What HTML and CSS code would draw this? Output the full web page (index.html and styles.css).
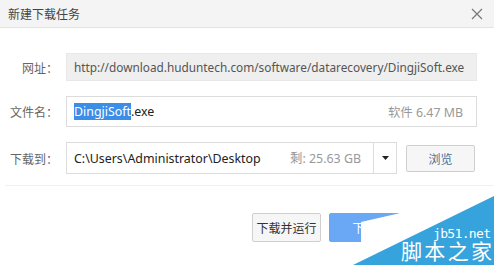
FILE: index.html
```html
<!DOCTYPE html>
<html lang="zh-CN">
<head>
    <meta charset="UTF-8">
    <title>新建下载任务</title>
    <link rel="stylesheet" href="styles.css">
</head>
<body>
    <div class="dialog">
        <div class="titlebar">
            <span class="title">新建下载任务</span>
            <svg class="close" width="12" height="12" viewBox="0 0 12 12">
                <path d="M1 1L11 11M11 1L1 11" stroke="#777" stroke-width="1.2" fill="none"/>
            </svg>
        </div>

        <div class="form">
            <div class="row row-url">
                <label>网址：</label>
                <div class="field url">http://download.huduntech.com/software/datarecovery/DingjiSoft.exe</div>
            </div>
            <div class="row row-name">
                <label>文件名：</label>
                <div class="field name">
                    <span><span class="sel">DingjiSoft</span>.exe</span>
                    <span class="meta">软件 6.47 MB</span>
                </div>
            </div>
            <div class="row row-path">
                <label>下载到：</label>
                <div class="path-group">
                    <div class="field path">
                        <span>C:\Users\Administrator\Desktop</span>
                        <span class="meta">剩: 25.63 GB</span>
                    </div>
                    <div class="drop">
                        <svg width="7" height="4" viewBox="0 0 7 4"><path d="M0 0H7L3.5 4Z" fill="#222"/></svg>
                    </div>
                </div>
                <button class="btn browse">浏览</button>
            </div>
        </div>

        <div class="footer">
            <button class="btn">下载并运行</button>
            <button class="btn primary">下载</button>
        </div>

        <!-- site watermark in the corner -->
        <svg class="watermark" width="154" height="85" viewBox="0 0 154 85">
            <polygon points="21,42 100,24 154,10 154,17 13,85 21,85" fill="#fff"/>
            <polygon points="13,85 154,16 154,85" fill="#36a3dd"/>
            <text x="93" y="58" class="wm-en" textLength="58">jb51.net</text>
            <text x="61" y="79" class="wm-cn" textLength="91">脚本之家</text>
        </svg>
    </div>
</body>
</html>
```

FILE: styles.css
```css
body {
    margin: 0;
    font-family: "Noto Sans", "Noto Sans CJK SC", sans-serif;
    font-size: 12px;
    color: #333;
    background: #fff;
}

.dialog {
    position: relative;
    width: 494px;
    height: 265px;
    overflow: hidden;
    background: #fff;
}

.titlebar {
    height: 28px;
    background: #f4f4f4;
    border-bottom: 1px solid #e2e2e2;
    box-sizing: border-box;
    display: flex;
    align-items: center;
    justify-content: space-between;
    padding: 0 11px 0 8px;
}

.title {
    font-family: "Noto Sans CJK SC", sans-serif;
    font-size: 12px;
    color: #444;
}

.form {
    padding: 25px 17px 0 0;
    display: flex;
    flex-direction: column;
    gap: 15px;
}

.row {
    display: flex;
    align-items: center;
}

.row label {
    flex: 0 0 58px;
    margin-right: 8px;
    text-align: right;
    font-family: "Noto Sans CJK SC", sans-serif;
    color: #666;
    white-space: nowrap;
}

.field {
    flex: 1;
    min-width: 0;
    box-sizing: border-box;
    display: flex;
    align-items: center;
    justify-content: space-between;
    padding: 0 6px 0 7px;
    font-size: 12.4px;
    white-space: nowrap;
}

.url {
    height: 28px;
    background: #efefef;
    border: 1px solid #e8e8e8;
    color: #555;
    font-size: 11.8px;
}

.name {
    height: 31px;
    border: 1px solid #dcdcdc;
    color: #222;
    padding-right: 13px;
}

.sel {
    background: #3b8de8;
    color: #fff;
}

.meta {
    font-family: "Noto Sans", "Noto Sans CJK SC", sans-serif;
    color: #999;
}

.path-group {
    display: flex;
    flex: 0 0 331px;
    height: 32px;
    border: 1px solid #dcdcdc;
    box-sizing: border-box;
}

.path {
    height: 100%;
    color: #222;
    padding-right: 12px;
}

.drop {
    width: 22px;
    border-left: 1px solid #dcdcdc;
    display: flex;
    align-items: center;
    justify-content: center;
}

.btn {
    font-family: "Noto Sans CJK SC", sans-serif;
    font-size: 12px;
    color: #333;
    background: #f6f6f6;
    border: 1px solid #cfcfcf;
    border-radius: 2px;
    padding: 0;
}

.browse {
    flex: 0 0 69px;
    height: 27px;
    margin-left: 9px;
    color: #4a6f9a;
}

.footer {
    margin-top: 11px;
    border-top: 1px solid #f0f0f0;
    margin-left: 5px;
    padding: 27px 94px 0 0;
    display: flex;
    justify-content: flex-end;
    gap: 8px;
}

.footer .btn {
    width: 69px;
    height: 29px;
}

.footer .primary {
    width: 71px;
    background: #6aa8f5;
    border-color: #6aa8f5;
    color: #fff;
}

.watermark {
    position: absolute;
    right: 0;
    bottom: 0;
}

.wm-en {
    font-family: "DejaVu Sans Mono", monospace;
    font-size: 13px;
    fill: #fff;
}

.wm-cn {
    font-family: "Noto Sans CJK SC", sans-serif;
    font-size: 21px;
    fill: #fff;
}
```
